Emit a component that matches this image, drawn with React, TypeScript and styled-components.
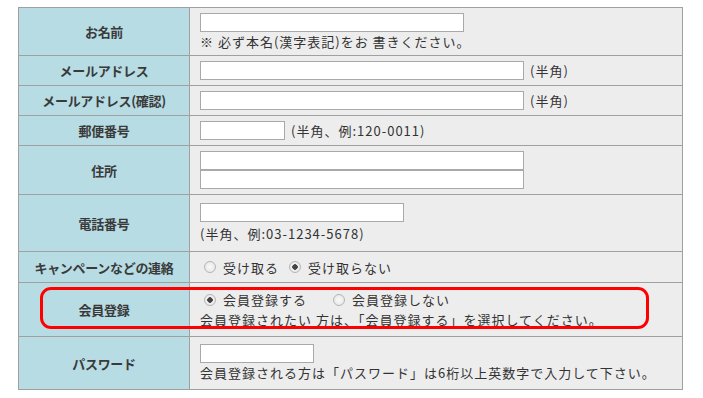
import { ReactElement } from 'react'
import styled, { createGlobalStyle } from 'styled-components'

const GlobalStyle = createGlobalStyle`
  body {
    margin: 0;
    background: #ffffff;
    font-family: "Noto Sans CJK JP", "Noto Sans", sans-serif;
    color: #333333;
  }
`

const FormWrapper = styled.div`
  position: relative;
  width: 665px;
  margin: 7px 0 0 18px;
`

const FormTable = styled.table`
  width: 665px;
  border-collapse: collapse;
  table-layout: fixed;
  font-size: 13px;
`

const LabelCell = styled.th<{ rowHeight: number }>`
  width: 170px;
  height: ${(p) => p.rowHeight - 1}px;
  padding: 0;
  background: #b7dce4;
  border: 1px solid #a0a0a0;
  font-weight: bold;
  font-size: 13px;
  letter-spacing: -0.3px;
  color: #3a3a3a;
  text-align: center;
  vertical-align: middle;
`

const ValueCell = styled.td`
  padding: 0 0 0 10px;
  background: #ededed;
  border: 1px solid #a0a0a0;
  vertical-align: middle;
  line-height: 19px;
  letter-spacing: 1px;
`

const Line = styled.div`
  display: flex;
  align-items: center;
  gap: 6px;
  white-space: nowrap;
`

const TextInput = styled.input<{ w: number }>`
  box-sizing: border-box;
  display: block;
  width: ${(p) => p.w}px;
  height: 19px;
  margin: 0;
  padding: 0 2px;
  border: 1px solid #a9a9a9;
  background: #ffffff;
  font-size: 13px;
`

const Note = styled.div<{ top?: number }>`
  margin-top: ${(p) => p.top ?? 0}px;
  white-space: nowrap;
`

const RadioGroup = styled.label<{ after: number }>`
  display: inline-flex;
  align-items: center;
  gap: 7px;
  margin-right: ${(p) => p.after}px;
`

const Radio = styled.input`
  appearance: none;
  box-sizing: border-box;
  width: 12px;
  height: 12px;
  margin: 0 0 0 4px;
  border: 1px solid #b5b5b5;
  border-radius: 50%;
  background: radial-gradient(circle, #fafafa 0%, #e2e2e2 100%);
  &:checked {
    background: radial-gradient(circle, #444 0, #444 2.5px, #f2f2f2 3px, #e0e0e0 100%);
  }
`

const Highlight = styled.div`
  position: absolute;
  left: 22px;
  top: 280px;
  width: 609px;
  height: 42px;
  box-sizing: border-box;
  border: 3px solid #ff0000;
  border-radius: 11px;
  pointer-events: none;
`

const App = (): ReactElement => {
  return (
    <>
      <GlobalStyle />
      <FormWrapper>
        <FormTable>
          <tbody>
            <tr>
              <LabelCell rowHeight={48}>お名前</LabelCell>
              <ValueCell>
                <TextInput w={264} />
                <Note>※ 必ず本名(漢字表記)をお 書きください。</Note>
              </ValueCell>
            </tr>
            <tr>
              <LabelCell rowHeight={30}>メールアドレス</LabelCell>
              <ValueCell>
                <Line>
                  <TextInput w={324} />
                  (半角)
                </Line>
              </ValueCell>
            </tr>
            <tr>
              <LabelCell rowHeight={30}>メールアドレス(確認)</LabelCell>
              <ValueCell>
                <Line>
                  <TextInput w={324} />
                  (半角)
                </Line>
              </ValueCell>
            </tr>
            <tr>
              <LabelCell rowHeight={30}>郵便番号</LabelCell>
              <ValueCell>
                <Line>
                  <TextInput w={85} />
                  (半角、例:120-0011)
                </Line>
              </ValueCell>
            </tr>
            <tr>
              <LabelCell rowHeight={49}>住所</LabelCell>
              <ValueCell>
                <TextInput w={324} />
                <TextInput w={324} />
              </ValueCell>
            </tr>
            <tr>
              <LabelCell rowHeight={57}>電話番号</LabelCell>
              <ValueCell>
                <TextInput w={204} />
                <Note top={2}>(半角、例:03-1234-5678)</Note>
              </ValueCell>
            </tr>
            <tr>
              <LabelCell rowHeight={31}>キャンペーンなどの連絡</LabelCell>
              <ValueCell>
                <Line>
                  <RadioGroup after={0}>
                    <Radio type="radio" name="campaign" />
                    受け取る
                  </RadioGroup>
                  <RadioGroup after={0}>
                    <Radio type="radio" name="campaign" defaultChecked />
                    受け取らない
                  </RadioGroup>
                </Line>
              </ValueCell>
            </tr>
            <tr>
              <LabelCell rowHeight={54}>会員登録</LabelCell>
              <ValueCell>
                <Line>
                  <RadioGroup after={16}>
                    <Radio type="radio" name="member" defaultChecked />
                    会員登録する
                  </RadioGroup>
                  <RadioGroup after={0}>
                    <Radio type="radio" name="member" />
                    会員登録しない
                  </RadioGroup>
                </Line>
                <Note top={1}>会員登録されたい 方は、「会員登録する」を選択してください。</Note>
              </ValueCell>
            </tr>
            <tr>
              <LabelCell rowHeight={53}>パスワード</LabelCell>
              <ValueCell>
                <TextInput w={114} />
                <Note>会員登録される方は「パスワード」は6桁以上英数字で入力して下さい。</Note>
              </ValueCell>
            </tr>
          </tbody>
        </FormTable>
        <Highlight />
      </FormWrapper>
    </>
  )
}

export default App
